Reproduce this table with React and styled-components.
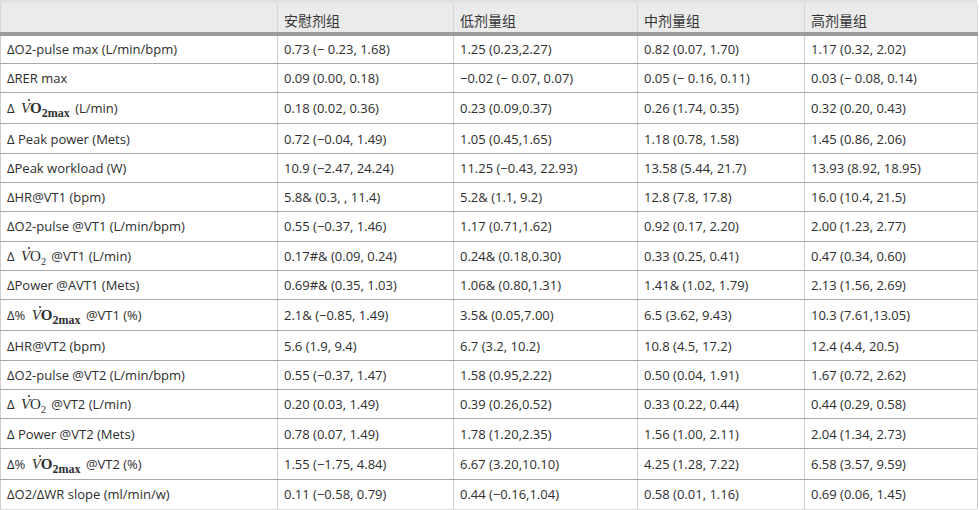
import React from 'react';
import styled, { createGlobalStyle } from 'styled-components';

const GlobalStyle = createGlobalStyle`
  html, body {
    margin: 0;
    padding: 0;
    background: #ffffff;
  }
  body {
    font-family: "Open Sans", "Noto Sans CJK SC", sans-serif;
    color: #333333;
  }
`;

const TableWrap = styled.div`
  width: 977px;
  border-top: 3px solid #e2e2e2;
  border-bottom: 3px solid #dddddd;
  box-sizing: border-box;
`;

const Table = styled.table`
  width: 977px;
  border-collapse: collapse;
  table-layout: fixed;
  font-size: 13px;
`;

const HeadCell = styled.th`
  background: #ebebeb;
  font-family: "Noto Sans CJK SC", "Open Sans", sans-serif;
  font-weight: 400;
  font-size: 14px;
  text-align: left;
  line-height: 20px;
  padding: 7px 6px 2px;
  border-left: 1px solid #d6d6d6;
  border-right: 1px solid #d6d6d6;
  border-bottom: 4px solid #9b9b9b;
  color: #333333;
`;

const Row = styled.tr`
  height: ${props => (props.tall ? '31.3px' : '29.3px')};

  &:last-child td {
    border-bottom: none;
  }
`;

const Cell = styled.td`
  line-height: 20px;
  padding: 0 6px;
  border-left: 1px solid #cfcfcf;
  border-right: 1px solid #cfcfcf;
  border-bottom: 1px solid #a9a9a9;
  white-space: nowrap;
  color: #2e2e2e;
  vertical-align: middle;
`;

const Sci = styled.span`
  font-family: "Liberation Serif", "Times New Roman", serif;
  font-size: 15px;
  margin: 0 2px 0 3px;
`;

const DotV = styled.i`
  position: relative;
  display: inline-block;

  &::after {
    content: '';
    position: absolute;
    top: 1px;
    left: 7px;
    width: 2px;
    height: 2px;
    background: #333333;
    border-radius: 50%;
  }
`;

const Oxy = styled.span`
  font-weight: ${props => (props.bold ? 700 : 400)};
`;

const Sub = styled.sub`
  font-size: ${props => (props.bold ? '12px' : '10px')};
  font-weight: ${props => (props.bold ? 700 : 400)};
  vertical-align: -4px;
  line-height: 0;
`;

function Vo2({ max }) {
  return (
    <Sci>
      <DotV>V</DotV>
      <Oxy bold={max}>O</Oxy>
      <Sub bold={max}>{max ? '2max' : '2'}</Sub>
    </Sci>
  );
}

const groups = ['安慰剂组', '低剂量组', '中剂量组', '高剂量组'];

const rows = [
  { label: 'ΔO2-pulse max (L/min/bpm)', values: ['0.73 (− 0.23, 1.68)', '1.25 (0.23,2.27)', '0.82 (0.07, 1.70)', '1.17 (0.32, 2.02)'] },
  { label: 'ΔRER max', values: ['0.09 (0.00, 0.18)', '−0.02 (− 0.07, 0.07)', '0.05 (− 0.16, 0.11)', '0.03 (− 0.08, 0.14)'] },
  { tall: true, label: <>Δ <Vo2 max /> (L/min)</>, values: ['0.18 (0.02, 0.36)', '0.23 (0.09,0.37)', '0.26 (1.74, 0.35)', '0.32 (0.20, 0.43)'] },
  { label: 'Δ Peak power (Mets)', values: ['0.72 (−0.04, 1.49)', '1.05 (0.45,1.65)', '1.18 (0.78, 1.58)', '1.45 (0.86, 2.06)'] },
  { label: 'ΔPeak workload (W)', values: ['10.9 (−2.47, 24.24)', '11.25 (−0.43, 22.93)', '13.58 (5.44, 21.7)', '13.93 (8.92, 18.95)'] },
  { label: 'ΔHR@VT1 (bpm)', values: ['5.8& (0.3, , 11.4)', '5.2& (1.1, 9.2)', '12.8 (7.8, 17.8)', '16.0 (10.4, 21.5)'] },
  { label: 'ΔO2-pulse @VT1 (L/min/bpm)', values: ['0.55 (−0.37, 1.46)', '1.17 (0.71,1.62)', '0.92 (0.17, 2.20)', '2.00 (1.23, 2.77)'] },
  { label: <>Δ <Vo2 /> @VT1 (L/min)</>, values: ['0.17#& (0.09, 0.24)', '0.24& (0.18,0.30)', '0.33 (0.25, 0.41)', '0.47 (0.34, 0.60)'] },
  { label: 'ΔPower @AVT1 (Mets)', values: ['0.69#& (0.35, 1.03)', '1.06& (0.80,1.31)', '1.41& (1.02, 1.79)', '2.13 (1.56, 2.69)'] },
  { tall: true, label: <>Δ% <Vo2 max /> @VT1 (%)</>, values: ['2.1& (−0.85, 1.49)', '3.5& (0.05,7.00)', '6.5 (3.62, 9.43)', '10.3 (7.61,13.05)'] },
  { label: 'ΔHR@VT2 (bpm)', values: ['5.6 (1.9, 9.4)', '6.7 (3.2, 10.2)', '10.8 (4.5, 17.2)', '12.4 (4.4, 20.5)'] },
  { label: 'ΔO2-pulse @VT2 (L/min/bpm)', values: ['0.55 (−0.37, 1.47)', '1.58 (0.95,2.22)', '0.50 (0.04, 1.91)', '1.67 (0.72, 2.62)'] },
  { label: <>Δ <Vo2 /> @VT2 (L/min)</>, values: ['0.20 (0.03, 1.49)', '0.39 (0.26,0.52)', '0.33 (0.22, 0.44)', '0.44 (0.29, 0.58)'] },
  { label: 'Δ Power @VT2 (Mets)', values: ['0.78 (0.07, 1.49)', '1.78 (1.20,2.35)', '1.56 (1.00, 2.11)', '2.04 (1.34, 2.73)'] },
  { tall: true, label: <>Δ% <Vo2 max /> @VT2 (%)</>, values: ['1.55 (−1.75, 4.84)', '6.67 (3.20,10.10)', '4.25 (1.28, 7.22)', '6.58 (3.57, 9.59)'] },
  { label: 'ΔO2/ΔWR slope (ml/min/w)', values: ['0.11 (−0.58, 0.79)', '0.44 (−0.16,1.04)', '0.58 (0.01, 1.16)', '0.69 (0.06, 1.45)'] },
];

const widths = [277, 176, 184, 167, 173];

export default function App() {
  return (
    <>
      <GlobalStyle />
      <TableWrap>
        <Table>
          <colgroup>
            {widths.map((w, i) => (
              <col key={i} style={{ width: w }} />
            ))}
          </colgroup>
          <thead>
            <tr>
              <HeadCell />
              {groups.map(g => (
                <HeadCell key={g}>{g}</HeadCell>
              ))}
            </tr>
          </thead>
          <tbody>
            {rows.map((r, i) => (
              <Row key={i} tall={r.tall}>
                <Cell>{r.label}</Cell>
                {r.values.map((v, j) => (
                  <Cell key={j}>{v}</Cell>
                ))}
              </Row>
            ))}
          </tbody>
        </Table>
      </TableWrap>
    </>
  );
}
